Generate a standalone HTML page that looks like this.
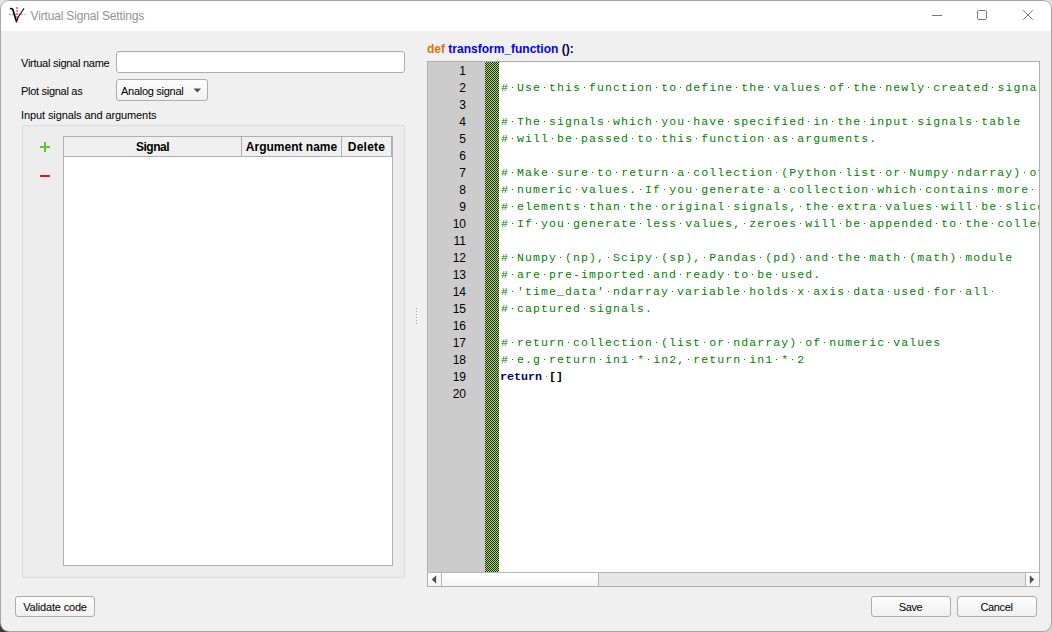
<!DOCTYPE html>
<html><head><meta charset="utf-8"><title>Virtual Signal Settings</title>
<style>
html,body{margin:0;padding:0;}
body{width:1052px;height:632px;overflow:hidden;background:#a6a6a6;position:relative;font-family:"Liberation Sans",sans-serif;font-size:11px;color:#000;}
.abs{position:absolute;}
#win{left:1px;top:1px;width:1050px;height:630px;background:#f0f0f0;border-radius:8px;overflow:hidden;box-shadow:0 0 0 1px #a6a6a6;}
.cn{width:10px;height:10px;}
#tbar{left:0;top:0;width:1050px;height:30px;background:#fff;}
#title{left:29.5px;top:7px;font-size:12px;color:#939393;white-space:nowrap;line-height:16px;letter-spacing:-0.16px;}
.lbl{white-space:nowrap;line-height:16px;font-size:11px;}
.inp{background:#fff;border:1px solid #adadad;border-radius:3px;box-sizing:border-box;}
.btn{box-sizing:border-box;border:1px solid #adadad;border-radius:3px;background:linear-gradient(#fefefe,#f0f0f0);text-align:center;line-height:21px;font-size:11px;white-space:nowrap;}
#grp{left:21px;top:124px;width:383px;height:453px;box-sizing:border-box;border:1px solid #dcdcdc;background:#ececec;border-radius:2px;}
#tbl{left:62px;top:135px;width:330px;height:430px;box-sizing:border-box;border:1px solid #afafaf;background:#fff;}
#hdr{left:0;top:0;width:328px;height:19px;background:#f0f0f0;border-bottom:1px solid #afafaf;}
.hc{top:0;height:19px;line-height:21px;font-weight:bold;font-size:12px;text-align:center;box-sizing:border-box;border-right:1px solid #afafaf;}
#ed{left:426px;top:60px;width:613px;height:526px;box-sizing:border-box;border:1px solid #afafaf;background:#fff;overflow:hidden;}
#gut{left:0;top:0;width:57px;height:510px;background:#cccccc;}
#fold{left:57px;top:0;width:14px;height:510px;}
#nums{left:0;top:1px;width:38px;text-align:right;font-size:12px;line-height:17px;color:#000;}
#code{left:73px;top:0;font-family:"Liberation Mono",monospace;font-size:11.5px;letter-spacing:1.1px;line-height:17px;color:#007f00;white-space:pre;margin:0;}
#code s{text-decoration:none;display:inline-block;height:17px;vertical-align:top;background:linear-gradient(#007f00,#007f00) no-repeat 3px 8px/1px 1px;}
#code s.g{background-image:linear-gradient(#808080,#808080);background-position:4px 8px;font-size:11.67px;letter-spacing:0;}
#code b{color:#00007f;font-size:11.67px;letter-spacing:0;margin-left:-1px;}
#code i{font-style:normal;color:#000;font-weight:bold;font-size:11.67px;letter-spacing:0;}
#sb{left:0;top:510px;width:611px;height:13px;background:#e6e6e6;border-top:1px solid #b4b4b4;}
.sbb{top:0;height:13px;background:linear-gradient(#ffffff,#f4f4f4);}
</style></head><body>
<div class="abs cn" style="left:0;top:0;background:#e4e4e4"></div><div class="abs cn" style="right:0;top:0;background:#e0e0e0"></div><div class="abs cn" style="left:0;bottom:0;background:#3a3a3a"></div><div class="abs cn" style="right:0;bottom:0;background:#d4d4d4"></div>
<div id="win" class="abs">
 <div id="tbar" class="abs"></div>
 <svg class="abs" style="left:7px;top:5px" width="20" height="20" viewBox="0 0 20 20">
  <path d="M1 8.5 H17.5" stroke="#a0a0a0" stroke-width="1.3" stroke-dasharray="1.6 1.5" fill="none"/>
  <path d="M9 1 V17" stroke="#f07880" stroke-width="1.8" stroke-dasharray="2 1" fill="none"/>
  <path d="M1.9 2.0 C3.8 1.5 5.3 2.0 5.9 4 L9.1 14.8 L8.3 16.2 L7.5 15.4 L4.5 5.2 C4.1 3.8 3.6 3.2 1.9 3.2 Z" fill="#0a0a0a"/>
  <path d="M8.4 15.6 L10.2 11.2 L16 2.3" stroke="#0a0a0a" stroke-width="1.15" fill="none"/>
 </svg>
 <div id="title" class="abs">Virtual Signal Settings</div>
 <svg class="abs" style="left:920px;top:0" width="130" height="30" viewBox="0 0 130 30">
  <path d="M11 14.5 H21" stroke="#777" stroke-width="1" fill="none"/>
  <rect x="56.5" y="9.5" width="9" height="9" rx="1.2" stroke="#777" stroke-width="1" fill="none"/>
  <path d="M102.3 9.3 L111.7 18.7 M111.7 9.3 L102.3 18.7" stroke="#777" stroke-width="1" fill="none"/>
 </svg>

 <div class="abs lbl" style="left:20px;top:54px;letter-spacing:-0.26px;">Virtual signal name</div>
 <div class="abs inp" style="left:115px;top:50px;width:289px;height:22px;"></div>
 <div class="abs lbl" style="left:20px;top:82px;letter-spacing:-0.29px;">Plot signal as</div>
 <div class="abs btn" style="left:115px;top:78px;width:92px;height:22px;text-align:left;padding-left:4px;line-height:22px;letter-spacing:-0.28px;">Analog signal<svg class="abs" style="left:76px;top:8px" width="9" height="6" viewBox="0 0 9 6"><path d="M0.5 0.5 L8 0.5 L4.25 4.6 Z" fill="#505050"/></svg></div>
 <div class="abs lbl" style="left:20px;top:106px;letter-spacing:-0.1px;">Input signals and arguments</div>

 <div id="grp" class="abs"></div>
 <div class="abs" style="left:39px;top:145px;width:10px;height:2px;background:#5ac832;"></div>
 <div class="abs" style="left:43px;top:141px;width:2px;height:10px;background:#5ac832;"></div>
 <div class="abs" style="left:39px;top:174px;width:10px;height:2px;background:#e81123;"></div>
 <div id="tbl" class="abs">
  <div id="hdr" class="abs">
   <div class="abs hc" style="left:0;width:178px;letter-spacing:-0.47px;">Signal</div>
   <div class="abs hc" style="left:178px;width:100px;">Argument name</div>
   <div class="abs hc" style="left:278px;width:50px;letter-spacing:0.26px;">Delete</div>
  </div>
 </div>

 <div class="abs lbl" style="left:426px;top:40px;font-weight:bold;font-size:12px;"><span style="color:#e07010">def</span> <span style="color:#0000ff">transform_function</span> <span style="color:#000040">():</span></div>
 <svg class="abs" style="left:415px;top:307px" width="2" height="17" shape-rendering="crispEdges"><rect x="1" y="1" width="1" height="1" fill="#fff"/><rect x="0" y="0" width="1" height="1" fill="#a0a0a0"/><rect x="1" y="4" width="1" height="1" fill="#fff"/><rect x="0" y="3" width="1" height="1" fill="#a0a0a0"/><rect x="1" y="7" width="1" height="1" fill="#fff"/><rect x="0" y="6" width="1" height="1" fill="#a0a0a0"/><rect x="1" y="10" width="1" height="1" fill="#fff"/><rect x="0" y="9" width="1" height="1" fill="#a0a0a0"/><rect x="1" y="13" width="1" height="1" fill="#fff"/><rect x="0" y="12" width="1" height="1" fill="#a0a0a0"/><rect x="1" y="16" width="1" height="1" fill="#fff"/><rect x="0" y="15" width="1" height="1" fill="#a0a0a0"/></svg>
 <div id="ed" class="abs">
  <div id="gut" class="abs"></div>
  <svg id="fold" class="abs" width="14" height="510"><defs><pattern id="ck" width="2" height="2" patternUnits="userSpaceOnUse"><rect width="2" height="2" fill="#302800"/><rect width="1" height="1" fill="#9cdc68"/><rect x="1" y="1" width="1" height="1" fill="#9cdc68"/></pattern></defs><rect width="14" height="510" fill="url(#ck)" shape-rendering="crispEdges"/></svg>
  <div id="nums" class="abs">1<br>2<br>3<br>4<br>5<br>6<br>7<br>8<br>9<br>10<br>11<br>12<br>13<br>14<br>15<br>16<br>17<br>18<br>19<br>20</div>
<pre id="code" class="abs">

#<s> </s>Use<s> </s>this<s> </s>function<s> </s>to<s> </s>define<s> </s>the<s> </s>values<s> </s>of<s> </s>the<s> </s>newly<s> </s>created<s> </s>signal.

#<s> </s>The<s> </s>signals<s> </s>which<s> </s>you<s> </s>have<s> </s>specified<s> </s>in<s> </s>the<s> </s>input<s> </s>signals<s> </s>table
#<s> </s>will<s> </s>be<s> </s>passed<s> </s>to<s> </s>this<s> </s>function<s> </s>as<s> </s>arguments.

#<s> </s>Make<s> </s>sure<s> </s>to<s> </s>return<s> </s>a<s> </s>collection<s> </s>(Python<s> </s>list<s> </s>or<s> </s>Numpy<s> </s>ndarray)<s> </s>of
#<s> </s>numeric<s> </s>values.<s> </s>If<s> </s>you<s> </s>generate<s> </s>a<s> </s>collection<s> </s>which<s> </s>contains<s> </s>more<s> </s>
#<s> </s>elements<s> </s>than<s> </s>the<s> </s>original<s> </s>signals,<s> </s>the<s> </s>extra<s> </s>values<s> </s>will<s> </s>be<s> </s>sliced.
#<s> </s>If<s> </s>you<s> </s>generate<s> </s>less<s> </s>values,<s> </s>zeroes<s> </s>will<s> </s>be<s> </s>appended<s> </s>to<s> </s>the<s> </s>collection.

#<s> </s>Numpy<s> </s>(np),<s> </s>Scipy<s> </s>(sp),<s> </s>Pandas<s> </s>(pd)<s> </s>and<s> </s>the<s> </s>math<s> </s>(math)<s> </s>module
#<s> </s>are<s> </s>pre-imported<s> </s>and<s> </s>ready<s> </s>to<s> </s>be<s> </s>used.
#<s> </s>'time_data'<s> </s>ndarray<s> </s>variable<s> </s>holds<s> </s>x<s> </s>axis<s> </s>data<s> </s>used<s> </s>for<s> </s>all<s> </s>
#<s> </s>captured<s> </s>signals.

#<s> </s>return<s> </s>collection<s> </s>(list<s> </s>or<s> </s>ndarray)<s> </s>of<s> </s>numeric<s> </s>values
#<s> </s>e.g<s> </s>return<s> </s>in1<s> </s>*<s> </s>in2,<s> </s>return<s> </s>in1<s> </s>*<s> </s>2
<b>return</b><s class="g"> </s><i>[]</i>
</pre>
  <div id="sb" class="abs">
   <div class="abs sbb" style="left:0;width:13px;border-right:1px solid #b4b4b4;"><svg class="abs" style="left:3px;top:2px" width="6" height="9" viewBox="0 0 6 9"><path d="M5.2 0.2 L5.2 8.8 L0.8 4.5 Z" fill="#505050"/></svg></div>
   <div class="abs sbb" style="left:14px;width:156px;border-right:1px solid #b4b4b4;"></div>
   <div class="abs sbb" style="left:597px;width:14px;border-left:1px solid #b4b4b4;"><svg class="abs" style="left:3px;top:2px" width="6" height="9" viewBox="0 0 6 9"><path d="M0.8 0.2 L0.8 8.8 L5.2 4.5 Z" fill="#505050"/></svg></div>
  </div>
 </div>

 <div class="abs btn" style="left:14px;top:595px;width:80px;height:21px;letter-spacing:-0.17px;">Validate code</div>
 <div class="abs btn" style="left:870px;top:595px;width:80px;height:21px;letter-spacing:-0.34px;padding-right:1px;">Save</div>
 <div class="abs btn" style="left:956px;top:595px;width:80px;height:21px;letter-spacing:-0.39px;padding-right:1px;">Cancel</div>
</div>
</body></html>
